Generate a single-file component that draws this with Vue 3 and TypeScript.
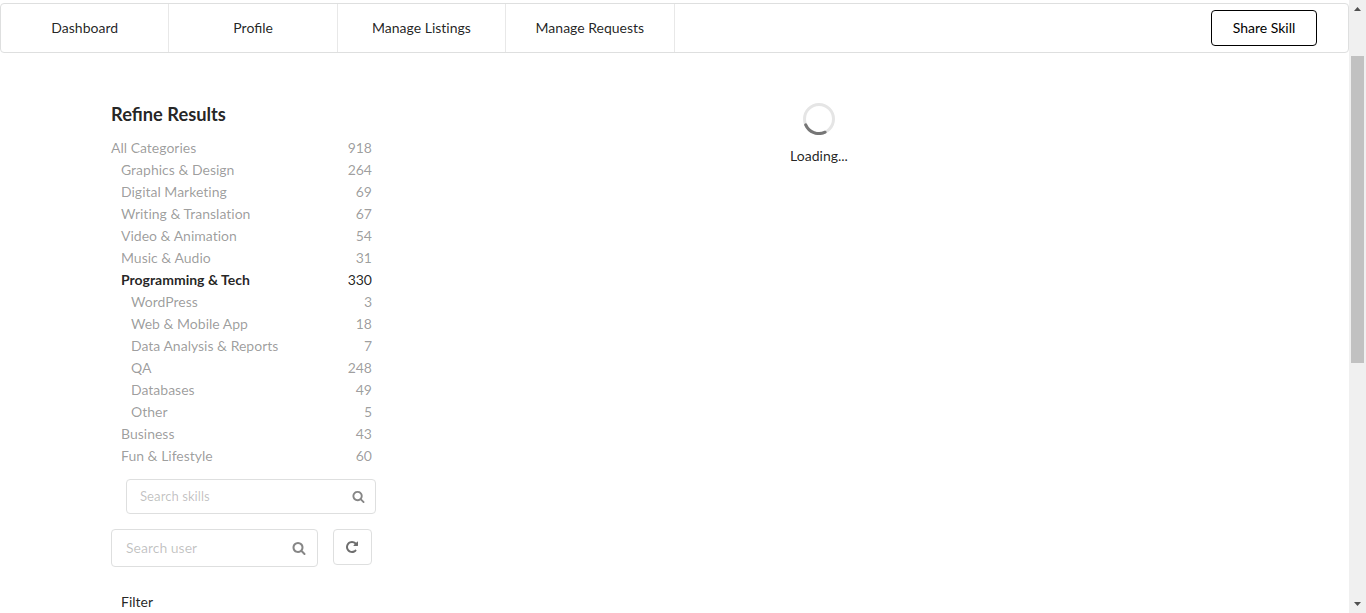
<script setup lang="ts">
import { ref } from 'vue'

interface Category {
  name: string
  count: number
  level: number
  active?: boolean
}

const tabs: string[] = ['Dashboard', 'Profile', 'Manage Listings', 'Manage Requests']

const categories: Category[] = [
  { name: 'All Categories', count: 918, level: 0 },
  { name: 'Graphics & Design', count: 264, level: 1 },
  { name: 'Digital Marketing', count: 69, level: 1 },
  { name: 'Writing & Translation', count: 67, level: 1 },
  { name: 'Video & Animation', count: 54, level: 1 },
  { name: 'Music & Audio', count: 31, level: 1 },
  { name: 'Programming & Tech', count: 330, level: 1, active: true },
  { name: 'WordPress', count: 3, level: 2 },
  { name: 'Web & Mobile App', count: 18, level: 2 },
  { name: 'Data Analysis & Reports', count: 7, level: 2 },
  { name: 'QA', count: 248, level: 2 },
  { name: 'Databases', count: 49, level: 2 },
  { name: 'Other', count: 5, level: 2 },
  { name: 'Business', count: 43, level: 1 },
  { name: 'Fun & Lifestyle', count: 60, level: 1 },
]

const skillQuery = ref('')
const userQuery = ref('')

const searchPath =
  'M1216 832q0-185-131.5-316.5t-316.5-131.5-316.5 131.5-131.5 316.5 131.5 316.5 316.5 131.5 316.5-131.5 131.5-316.5zm512 832q0 52-38 90t-90 38q-54 0-90-38l-343-342q-179 124-399 124-143 0-273.5-55.5t-225-150-150-225-55.5-273.5 55.5-273.5 150-225 225-150 273.5-55.5 273.5 55.5 225 150 150 225 55.5 273.5q0 220-124 399l343 343q37 37 37 90z'
const repeatPath =
  'M1664 256v448q0 26-19 45t-45 19h-448q-42 0-59-40-17-39 14-69l138-138q-148-137-349-137-104 0-198.5 40.5t-163.5 109.5-109.5 163.5-40.5 198.5 40.5 198.5 109.5 163.5 163.5 109.5 198.5 40.5q119 0 225-52t179-147q7-10 23-12 15 0 25 9l137 138q9 8 9.5 20.5t-7.5 22.5q-109 132-264 204.5t-327 72.5q-156 0-298-61t-245-164-164-245-61-298 61-298 164-245 245-164 298-61q147 0 284.5 55.5t244.5 156.5l130-129q29-31 70-14 39 17 39 59z'
</script>

<template>
  <div class="viewport">
    <div class="page">
      <nav class="menu">
        <a v-for="tab in tabs" :key="tab" class="tab">{{ tab }}</a>
        <button class="share">Share Skill</button>
      </nav>
      <main class="content">
        <aside class="sidebar">
          <h3 class="title">Refine Results</h3>
          <div class="categories">
            <a
              v-for="c in categories"
              :key="c.name"
              class="category"
              :class="[`level-${c.level}`, { active: c.active }]"
            >
              <span class="name">{{ c.name }}</span>
              <span class="count">{{ c.count }}</span>
            </a>
          </div>
          <div class="field skills">
            <input v-model="skillQuery" type="text" placeholder="Search skills" />
            <svg class="icon" viewBox="0 0 1792 1792"><path :d="searchPath" /></svg>
          </div>
          <div class="user-row">
            <div class="field user">
              <input v-model="userQuery" type="text" placeholder="Search user" />
              <svg class="icon" viewBox="0 0 1792 1792"><path :d="searchPath" /></svg>
            </div>
            <button class="reset" aria-label="Reset">
              <svg class="icon" viewBox="0 0 1792 1792"><path :d="repeatPath" /></svg>
            </button>
          </div>
          <div class="filter">Filter</div>
        </aside>
        <section class="results">
          <svg class="loader" viewBox="0 0 32 32">
            <circle class="track" cx="16" cy="16" r="14.5" />
            <path class="arc" d="M2.7 21.8A14.5 14.5 0 0 0 22.1 29.2" />
          </svg>
          <div class="loading">Loading...</div>
        </section>
      </main>
    </div>
    <div class="scrollbar">
      <svg class="arrow" viewBox="0 0 7 4"><path d="M0 4L3.5 0L7 4Z" /></svg>
      <div class="thumb"></div>
      <svg class="arrow down" viewBox="0 0 7 4"><path d="M0 0L3.5 4L7 0Z" /></svg>
    </div>
  </div>
</template>

<style>
body {
  overflow: hidden;
  background: #fff;
}
</style>

<style scoped>
.viewport {
  display: flex;
  height: 613px;
  overflow: hidden;
  font-family: Lato, 'Liberation Sans', sans-serif;
  font-size: 14px;
  line-height: 20px;
  color: rgba(0, 0, 0, 0.87);
}
.viewport * {
  box-sizing: border-box;
}
.page {
  flex: 1;
  min-width: 0;
  padding-top: 3px;
}
.menu {
  display: flex;
  align-items: center;
  height: 50px;
  border: 1px solid #dedfdf;
  border-radius: 4px;
}
.tab {
  display: flex;
  align-items: center;
  justify-content: center;
  width: 168.4px;
  height: 48px;
  border-right: 1px solid #e8e8e8;
}
.tab:nth-child(3) {
  font-variant-ligatures: none;
}
.share {
  width: 106px;
  height: 36px;
  margin-left: auto;
  margin-right: 31px;
  padding: 0;
  border: 1px solid #000;
  border-radius: 4px;
  background: #fff;
  font: inherit;
  color: #000;
}
.content {
  display: flex;
  padding-top: 50px;
}
.sidebar {
  width: 265px;
  margin-left: 111px;
}
.title {
  margin: 0 0 13px;
  font-size: 18.3px;
  font-weight: 700;
  line-height: 22px;
}
.category {
  display: flex;
  justify-content: space-between;
  height: 22px;
  padding-right: 4px;
  line-height: 20px;
  color: rgba(0, 0, 0, 0.4);
  font-variant-ligatures: none;
}
.level-1 {
  padding-left: 10px;
}
.level-2 {
  padding-left: 20px;
}
.active {
  color: rgba(0, 0, 0, 0.87);
}
.active .name {
  font-weight: 700;
}
.field {
  display: flex;
  align-items: center;
  border: 1px solid #dedfdf;
  border-radius: 4px;
}
.field input {
  flex: 1;
  min-width: 0;
  padding: 0;
  border: 0;
  outline: 0;
  background: transparent;
  font: inherit;
}
.field input::placeholder {
  color: rgba(0, 0, 0, 0.25);
}
.icon {
  width: 14px;
  height: 14px;
  fill: #868686;
}
.skills {
  height: 35px;
  margin: 11px 0 15px 15px;
  padding: 0 10px 0 13px;
}
.skills input {
  padding-bottom: 1px;
  font-size: 13.2px;
}
.skills .icon {
  width: 13px;
  height: 13px;
}
.user-row {
  display: flex;
  gap: 15px;
}
.user {
  width: 207px;
  height: 38px;
  padding: 0 11px 0 14px;
}
.reset {
  display: flex;
  align-items: center;
  justify-content: center;
  width: 39px;
  height: 36px;
  padding: 0 1px 0 0;
  border: 1px solid #dedfdf;
  border-radius: 4px;
  background: #fff;
}
.reset .icon {
  fill: #6e6e6e;
}
.filter {
  margin: 25px 0 0 10px;
}
.results {
  display: flex;
  flex-direction: column;
  align-items: center;
  width: 886px;
}
.loader {
  width: 32px;
  height: 32px;
}
.track {
  fill: none;
  stroke: #e5e5e5;
  stroke-width: 3;
}
.arc {
  fill: none;
  stroke: #767676;
  stroke-width: 3;
  stroke-linecap: round;
}
.loading {
  margin-top: 11px;
}
.scrollbar {
  display: flex;
  flex-direction: column;
  align-items: center;
  width: 17px;
  padding: 7px 0;
  background: #f0f0f0;
}
.arrow {
  width: 7px;
  height: 4px;
  fill: #505050;
}
.thumb {
  width: 13px;
  height: 307px;
  margin-top: 45px;
  background: #c1c1c1;
}
.down {
  margin-top: auto;
}
</style>
